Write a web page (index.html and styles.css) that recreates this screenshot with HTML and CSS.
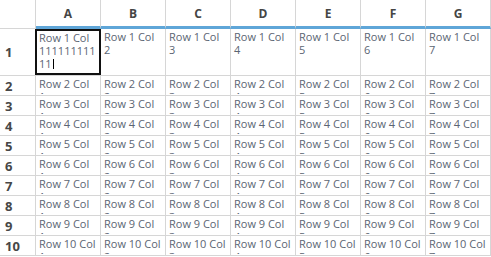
FILE: index.html
```html
<!DOCTYPE html>
<html lang="en">
<head>
<meta charset="UTF-8">
<meta name="viewport" content="width=device-width, initial-scale=1.0">
<title>Sheet</title>
<link rel="stylesheet" href="styles.css">
</head>
<body>
<table class="sheet">
  <colgroup>
    <col class="col-head">
    <col><col><col><col><col><col><col>
  </colgroup>
  <thead>
    <tr>
      <th class="corner"><div></div></th>
      <th class="col-label"><div>A</div></th>
      <th class="col-label"><div>B</div></th>
      <th class="col-label"><div>C</div></th>
      <th class="col-label"><div>D</div></th>
      <th class="col-label"><div>E</div></th>
      <th class="col-label"><div>F</div></th>
      <th class="col-label"><div>G</div></th>
    </tr>
  </thead>
  <tbody>
    <tr class="tall">
      <th class="row-label"><div>1</div></th>
      <td class="active">
        <div class="cell"></div>
        <div class="editor">Row 1 Col 11111111111<span class="caret"></span></div>
      </td>
      <td><div class="cell">Row 1 Col 2</div></td>
      <td><div class="cell">Row 1 Col 3</div></td>
      <td><div class="cell">Row 1 Col 4</div></td>
      <td><div class="cell">Row 1 Col 5</div></td>
      <td><div class="cell">Row 1 Col 6</div></td>
      <td><div class="cell">Row 1 Col 7</div></td>
    </tr>
    <tr>
      <th class="row-label"><div>2</div></th>
      <td><div class="cell">Row 2 Col 1</div></td>
      <td><div class="cell">Row 2 Col 2</div></td>
      <td><div class="cell">Row 2 Col 3</div></td>
      <td><div class="cell">Row 2 Col 4</div></td>
      <td><div class="cell">Row 2 Col 5</div></td>
      <td><div class="cell">Row 2 Col 6</div></td>
      <td><div class="cell">Row 2 Col 7</div></td>
    </tr>
    <tr>
      <th class="row-label"><div>3</div></th>
      <td><div class="cell">Row 3 Col 1</div></td>
      <td><div class="cell">Row 3 Col 2</div></td>
      <td><div class="cell">Row 3 Col 3</div></td>
      <td><div class="cell">Row 3 Col 4</div></td>
      <td><div class="cell">Row 3 Col 5</div></td>
      <td><div class="cell">Row 3 Col 6</div></td>
      <td><div class="cell">Row 3 Col 7</div></td>
    </tr>
    <tr>
      <th class="row-label"><div>4</div></th>
      <td><div class="cell">Row 4 Col 1</div></td>
      <td><div class="cell">Row 4 Col 2</div></td>
      <td><div class="cell">Row 4 Col 3</div></td>
      <td><div class="cell">Row 4 Col 4</div></td>
      <td><div class="cell">Row 4 Col 5</div></td>
      <td><div class="cell">Row 4 Col 6</div></td>
      <td><div class="cell">Row 4 Col 7</div></td>
    </tr>
    <tr>
      <th class="row-label"><div>5</div></th>
      <td><div class="cell">Row 5 Col 1</div></td>
      <td><div class="cell">Row 5 Col 2</div></td>
      <td><div class="cell">Row 5 Col 3</div></td>
      <td><div class="cell">Row 5 Col 4</div></td>
      <td><div class="cell">Row 5 Col 5</div></td>
      <td><div class="cell">Row 5 Col 6</div></td>
      <td><div class="cell">Row 5 Col 7</div></td>
    </tr>
    <tr>
      <th class="row-label"><div>6</div></th>
      <td><div class="cell">Row 6 Col 1</div></td>
      <td><div class="cell">Row 6 Col 2</div></td>
      <td><div class="cell">Row 6 Col 3</div></td>
      <td><div class="cell">Row 6 Col 4</div></td>
      <td><div class="cell">Row 6 Col 5</div></td>
      <td><div class="cell">Row 6 Col 6</div></td>
      <td><div class="cell">Row 6 Col 7</div></td>
    </tr>
    <tr>
      <th class="row-label"><div>7</div></th>
      <td><div class="cell">Row 7 Col 1</div></td>
      <td><div class="cell">Row 7 Col 2</div></td>
      <td><div class="cell">Row 7 Col 3</div></td>
      <td><div class="cell">Row 7 Col 4</div></td>
      <td><div class="cell">Row 7 Col 5</div></td>
      <td><div class="cell">Row 7 Col 6</div></td>
      <td><div class="cell">Row 7 Col 7</div></td>
    </tr>
    <tr>
      <th class="row-label"><div>8</div></th>
      <td><div class="cell">Row 8 Col 1</div></td>
      <td><div class="cell">Row 8 Col 2</div></td>
      <td><div class="cell">Row 8 Col 3</div></td>
      <td><div class="cell">Row 8 Col 4</div></td>
      <td><div class="cell">Row 8 Col 5</div></td>
      <td><div class="cell">Row 8 Col 6</div></td>
      <td><div class="cell">Row 8 Col 7</div></td>
    </tr>
    <tr>
      <th class="row-label"><div>9</div></th>
      <td><div class="cell">Row 9 Col 1</div></td>
      <td><div class="cell">Row 9 Col 2</div></td>
      <td><div class="cell">Row 9 Col 3</div></td>
      <td><div class="cell">Row 9 Col 4</div></td>
      <td><div class="cell">Row 9 Col 5</div></td>
      <td><div class="cell">Row 9 Col 6</div></td>
      <td><div class="cell">Row 9 Col 7</div></td>
    </tr>
    <tr>
      <th class="row-label"><div>10</div></th>
      <td><div class="cell">Row 10 Col 1</div></td>
      <td><div class="cell">Row 10 Col 2</div></td>
      <td><div class="cell">Row 10 Col 3</div></td>
      <td><div class="cell">Row 10 Col 4</div></td>
      <td><div class="cell">Row 10 Col 5</div></td>
      <td><div class="cell">Row 10 Col 6</div></td>
      <td><div class="cell">Row 10 Col 7</div></td>
    </tr>
  </tbody>
</table>
</body>
</html>
```

FILE: styles.css
```css
body {
  margin: 0;
  background: #fff;
  font-family: "Open Sans", "Noto Sans", sans-serif;
}
.sheet {
  border-collapse: separate;
  border-spacing: 0;
  table-layout: fixed;
  width: 491px;
}
.sheet col {
  width: 65px;
}
.sheet col.col-head {
  width: 36px;
}
.sheet th,
.sheet td {
  box-sizing: border-box;
  padding: 0;
  border-right: 1px solid #d6d6d6;
  border-bottom: 1px solid #d6d6d6;
  vertical-align: top;
}
.corner div {
  height: 28px;
}
.col-label {
  border-bottom: 3px solid #5fa6d8 !important;
}
.col-label div {
  height: 26px;
  line-height: 27px;
  text-align: center;
  font-size: 12px;
  font-weight: 700;
  color: #454545;
}
.row-label div {
  height: 19px;
  line-height: 20px;
  padding-left: 5px;
  text-align: left;
  font-size: 13px;
  font-weight: 700;
  color: #474747;
}
.cell {
  height: 17px;
  margin-bottom: 1px;
  padding: 1px 3px 0;
  overflow: hidden;
  font-size: 11px;
  line-height: 13px;
  color: #5b6573;
  overflow-wrap: anywhere;
}
.tall .row-label div {
  height: 46px;
  line-height: 47px;
}
.tall .cell {
  height: 44px;
}
td.active {
  position: relative;
}
.editor {
  position: absolute;
  left: -1px;
  top: 0;
  width: 66px;
  height: 46px;
  box-sizing: border-box;
  border: 2px solid #111;
  padding: 0 2px;
  background: #fff;
  font-size: 11px;
  line-height: 13px;
  color: #5b6573;
  overflow-wrap: anywhere;
}
.caret {
  display: inline-block;
  width: 1px;
  height: 10px;
  margin-left: 1px;
  background: #000;
  vertical-align: -1px;
}
```
